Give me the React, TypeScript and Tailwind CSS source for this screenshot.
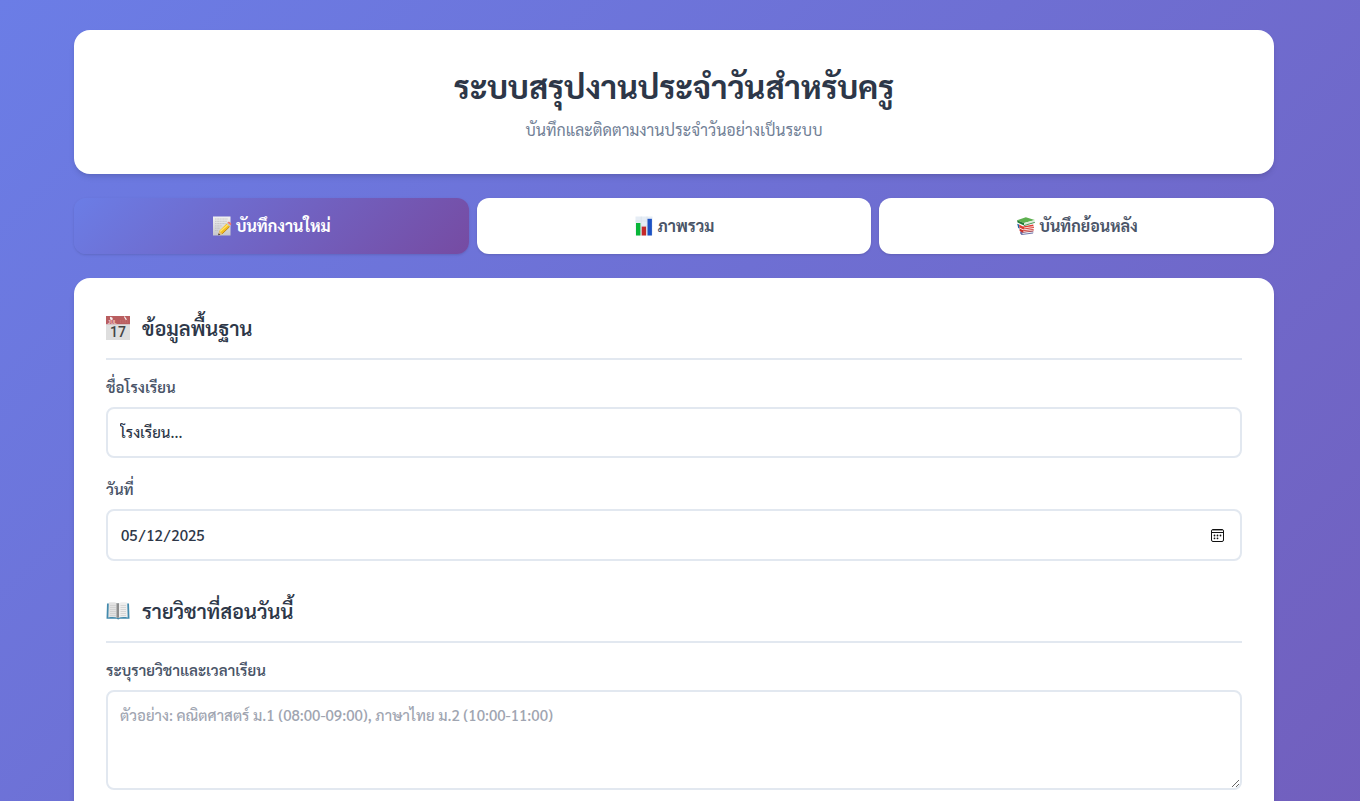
import type { ReactNode } from "react";

const NoteIcon = () => (
  <svg viewBox="0 0 20 20" className="size-5" aria-hidden="true">
    <defs>
      <linearGradient id="paper" x1="0" y1="0" x2="0" y2="1">
        <stop offset="0" stopColor="#f1f1f1" />
        <stop offset="1" stopColor="#c6c6ca" />
      </linearGradient>
    </defs>
    <rect x="1" y="0.5" width="17.5" height="19" fill="url(#paper)" />
    <g stroke="#bababa" strokeWidth="0.7" strokeDasharray="1.6 .6 2.4 .5">
      <path d="M3 3h13M3 5.3h12M3 7.6h11M3 9.9h7M3 12.2h5M3 14.5h3" />
    </g>
    <path d="M7.2 14.9 14.7 7.5l3.2 3-7.8 7.6-3.4.8z" fill="#f3bd1f" />
    <path d="m8.1 15.6 8-7.2" stroke="#ffe46b" strokeWidth="1.3" />
    <path d="m10.2 17.8 7.4-7.1" stroke="#b97908" strokeWidth="0.8" />
    <path d="m14.5 7.5 1-1 3.3 3-1 1z" fill="#bcc8ce" />
    <path d="m15.4 6.6.7-.7c1.4-.8 3.6 1.2 3.1 2.5l-.5 1.1z" fill="#ef7770" />
    <path d="m7.2 14.9-1 4.3 4-1.2z" fill="#e3bd83" />
    <path d="m6.6 17.3-.4 1.9 2-.5z" fill="#303030" />
  </svg>
);

const ChartIcon = () => (
  <svg viewBox="0 0 20 20" className="size-5" aria-hidden="true">
    <rect x="1.5" y="0.5" width="17" height="19" fill="#e6edf5" />
    <path d="M1.5 5h17M1.5 10h17M1.5 15h17M7.2.5v19M13 .5v19" stroke="#d0dae5" strokeWidth=".5" />
    <rect x="2" y="7" width="4.4" height="12.5" fill="#08b638" />
    <rect x="7.7" y="10.6" width="4.4" height="8.9" fill="#c42929" />
    <rect x="13.5" y="2.8" width="4.4" height="16.7" fill="#1c52c4" />
  </svg>
);

const BooksIcon = () => (
  <svg viewBox="0 0 20 20" className="size-5" aria-hidden="true">
    <path d="m4.2 15.4 12-1 1.2 1.4-.4 1.6-11.4 1.5-1.4-1.4z" fill="#6a70a8" />
    <path d="m6.4 16.8 10.8-1.2-.2 1-10.4 1.4z" fill="#f1f1f1" />
    <path d="m3.6 12.6 3.6 1.6 10.4-1.3-.2 2.4-10.8 1.3-3-1.7z" fill="#c9302c" />
    <path d="m7.4 14.9 10-1.2v.9L7.4 15.9z" fill="#f0dcd6" />
    <path d="M1.2 7.8 3 8.6l.8 4.2-1.6-.8z" fill="#2465a5" />
    <path d="m3 8.6 4 1.8 10.2-1.8.8 3.4-10.6 1.6-4-2.2z" fill="#de3c33" />
    <path d="m8 11.6 9.6-1.5.2.8-9.6 1.6z" fill="#f5d9d4" />
    <path d="M1 4.2 9.8 1.2l9 2.8L8 7z" fill="#5db04f" />
    <path d="M1 4.2 8 7v2.6L1.6 6.4z" fill="#237a34" />
    <path d="m8 7 10.6-2.8v2L8 9.2z" fill="#dfeedb" />
    <path d="m8 9.6 10.8-3.2" stroke="#237a34" strokeWidth=".8" />
  </svg>
);

const CalendarIcon = () => (
  <svg viewBox="0 0 24 24" className="size-6" aria-hidden="true">
    <rect width="24" height="24" fill="#dedede" />
    <rect width="24" height="8.2" fill="#b95d5f" />
    <path d="M4.5 1.5 6 3.4M18.6 1l1.5 2.4" stroke="#f6eeee" strokeWidth="1.2" strokeLinecap="round" />
    <circle cx="5.3" cy="2.6" r="1.3" fill="#f6eeee" />
    <text x="1.8" y="7.7" fontSize="4.7" fontFamily="Liberation Sans, sans-serif" fill="#f3cccc">JUL</text>
    <path d="M14 4.8h8M14 6.2h8" stroke="#ca8080" strokeWidth=".6" strokeDasharray="1 .7" />
    <text x="12" y="21.4" fontSize="14" textAnchor="middle" fontFamily="Roboto, sans-serif" fontWeight="500" fill="#444">17</text>
  </svg>
);

const BookIcon = () => (
  <svg viewBox="0 0 24 24" className="size-6" aria-hidden="true">
    <path d="M1 4.4h22l.5 15.3h-9.8l-1.5.8-1.5-.8H.5z" fill="#438aad" />
    <path d="M2.8 3.6c3.7-.6 6.7-.5 9.1.9v14.6c-2.8-1.3-6-1.2-9.6-.7z" fill="#e3e3e3" />
    <path d="M12 4.5c2.6-1.4 5.5-1.5 9.2-.9l.5 14.8c-3.6-.5-6.9-.6-9.7.7z" fill="#eee" />
    <path d="M10.5 4.1 12 4.5v14.6l-1.5-.6zM12 4.5l1-.4v14.4l-1 .6z" fill="#8c8c8c" />
    <path d="M4 6.5h5.8M4 8.5h5.8M4 10.5h5.8M4 12.5h5.8M4 14.5h5.8M4 16.5h5.8M14.5 6.5H20M14.5 8.5H20M14.5 10.5H20M14.5 12.5H20M14.5 14.5H20M14.5 16.5H20" stroke="#c6c6c6" strokeWidth=".6" />
  </svg>
);

const PickerIcon = () => (
  <svg
    viewBox="0 0 13 13"
    className="pointer-events-none absolute inset-y-0 right-[18px] my-auto size-[13px]"
    aria-hidden="true"
  >
    <rect x=".5" y=".5" width="12" height="12" rx="1.5" fill="none" stroke="#111" />
    <path d="M1 1.5h11" stroke="#999" />
    <path d="M1 3.5h11" stroke="#111" />
    <g fill="#111">
      <circle cx="3.5" cy="9.3" r=".9" />
      <circle cx="6.5" cy="9.3" r=".9" />
      <circle cx="3.5" cy="6.5" r=".9" />
      <circle cx="6.5" cy="6.5" r=".9" />
      <circle cx="9.5" cy="6.5" r=".9" />
    </g>
  </svg>
);

const tabs = [
  { label: "บันทึกงานใหม่", icon: <NoteIcon />, active: true },
  { label: "ภาพรวม", icon: <ChartIcon />, active: false },
  { label: "บันทึกย้อนหลัง", icon: <BooksIcon />, active: false },
];

function SectionTitle({ icon, children }: { icon: ReactNode; children: ReactNode }) {
  return (
    <h2 className="mb-4 flex items-center gap-3 border-b-2 border-[#e2e8f0] pb-3 text-xl leading-9 font-semibold text-[#2d3748]">
      {icon}
      <span>{children}</span>
    </h2>
  );
}

const labelClass = "block pb-[9px] text-[15px] leading-[22px] font-semibold text-[#4a5568]";
const fieldClass =
  "block w-full rounded-lg border-2 border-[#e2e8f0] bg-white px-3 pt-[11px] pb-[13px] text-[15px] leading-[23px] font-medium text-[#2d3748] placeholder:text-[#a0a5b1] focus:border-[#667eea] focus:outline-none";

export default function App() {
  return (
    <div className="min-h-screen bg-[linear-gradient(135deg,#6b7de6_0px,#764ba2_2567px)] pt-[30px] pr-3 pb-8 font-[Sarabun,'Noto_Sans_Thai_Looped','Noto_Sans_Thai',Loma,sans-serif] antialiased">
      <div className="mx-auto flex max-w-[1200px] flex-col gap-6">
        <header className="rounded-2xl bg-white p-8 text-center shadow-md">
          <h1 className="mb-2 text-[32px] leading-12 font-bold text-[#2d3748]">ระบบสรุปงานประจำวันสำหรับครู</h1>
          <p className="text-base leading-6 text-[#718096]">บันทึกและติดตามงานประจำวันอย่างเป็นระบบ</p>
        </header>
        <nav className="flex gap-2">
          {tabs.map((tab) => (
            <button
              key={tab.label}
              type="button"
              className={
                tab.active
                  ? "flex flex-1 items-center justify-center gap-1 rounded-xl bg-[linear-gradient(135deg,#6b7de6,#764ba2)] px-6 py-4 text-base leading-6 font-bold text-white shadow-sm"
                  : "flex flex-1 items-center justify-center gap-1 rounded-xl bg-white px-6 py-4 text-base leading-6 font-bold text-[#4a5568] shadow-sm"
              }
            >
              {tab.icon}
              <span>{tab.label}</span>
            </button>
          ))}
        </nav>
        <main className="rounded-2xl bg-white p-8 shadow-md">
          <section className="mb-8">
            <SectionTitle icon={<CalendarIcon />}>ข้อมูลพื้นฐาน</SectionTitle>
            <div className="mb-5">
              <label htmlFor="school" className={labelClass}>ชื่อโรงเรียน</label>
              <input id="school" type="text" defaultValue="โรงเรียน..." className={fieldClass} />
            </div>
            <div>
              <label htmlFor="date" className={labelClass}>วันที่</label>
              <div className="relative">
                <input
                  id="date"
                  type="date"
                  defaultValue="2025-05-12"
                  className={`${fieldClass} min-h-[52px] [&::-webkit-calendar-picker-indicator]:opacity-0`}
                />
                <PickerIcon />
              </div>
            </div>
          </section>
          <section>
            <SectionTitle icon={<BookIcon />}>รายวิชาที่สอนวันนี้</SectionTitle>
            <label htmlFor="subjects" className={labelClass}>ระบุรายวิชาและเวลาเรียน</label>
            <textarea
              id="subjects"
              placeholder="ตัวอย่าง: คณิตศาสตร์ ม.1 (08:00-09:00), ภาษาไทย ม.2 (10:00-11:00)"
              className={`${fieldClass} min-h-[100px] resize-y`}
            />
          </section>
        </main>
      </div>
    </div>
  );
}
